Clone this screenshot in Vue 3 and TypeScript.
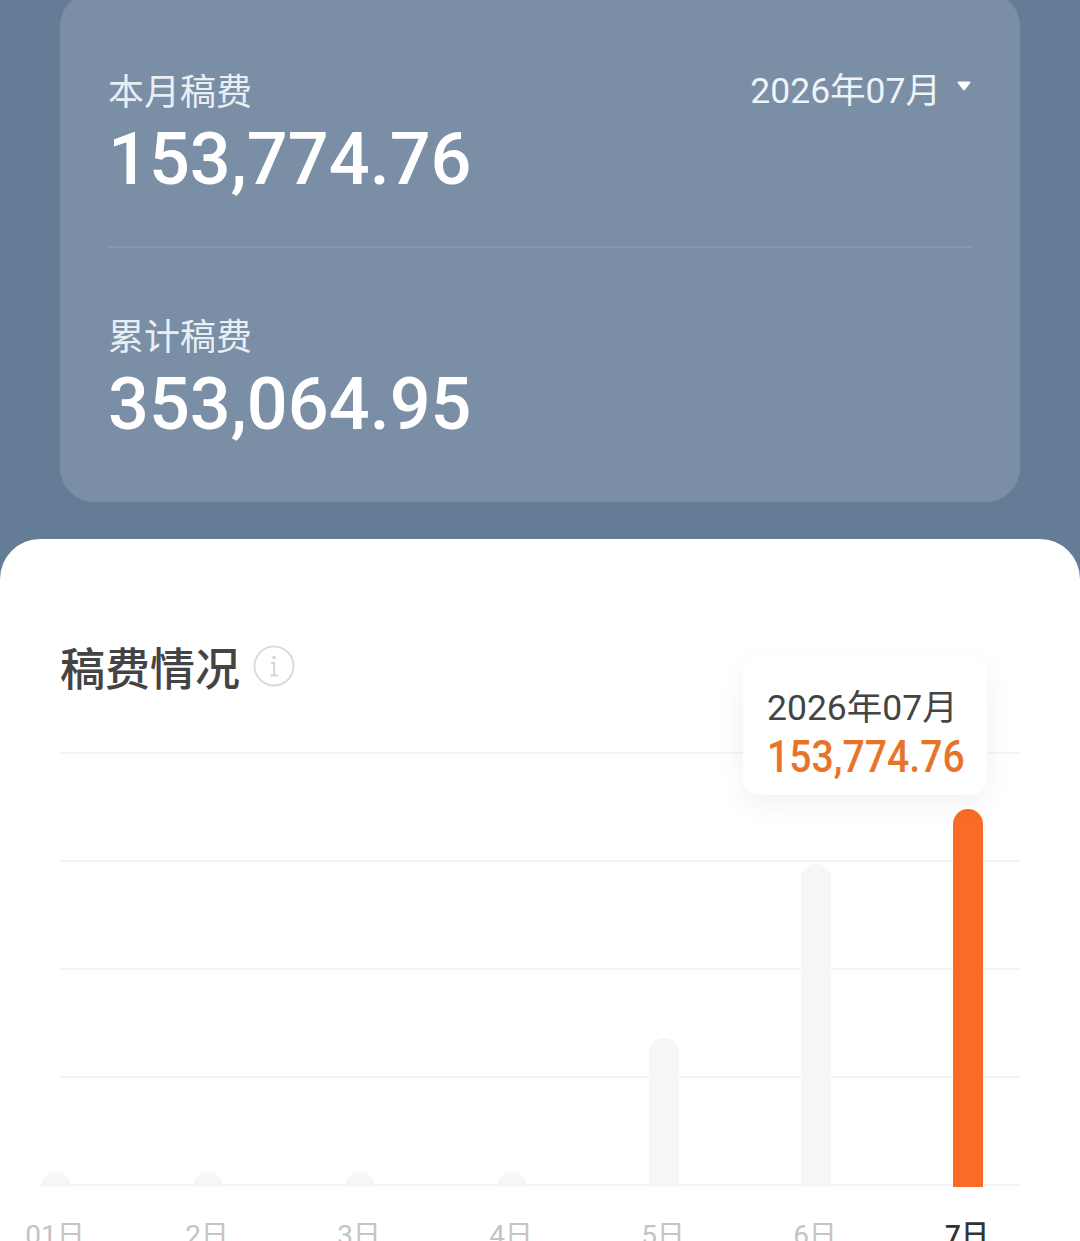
<template>
  <div class="page">
    <section class="summary">
      <div class="block">
        <div class="label">本月稿费</div>
        <div class="amount">153,774.76</div>
        <div class="month-picker">
          <span>2026年07月</span>
          <svg class="caret" width="14" height="10" viewBox="0 0 14 10">
            <path d="M1.5 1.5h11L7 8.5z" fill="#fff" stroke="#fff" stroke-width="2" stroke-linejoin="round" />
          </svg>
        </div>
      </div>
      <div class="divider"></div>
      <div class="block block-total">
        <div class="label">累计稿费</div>
        <div class="amount">353,064.95</div>
      </div>
    </section>

    <section class="sheet">
      <div class="title-row">
        <h2 class="title">稿费情况</h2>
        <svg class="info" width="42" height="42" viewBox="0 0 42 42" fill="none">
          <circle cx="21" cy="21" r="19.5" stroke="#dcdcdc" stroke-width="2" />
          <circle cx="21" cy="12.5" r="1.8" fill="#d4d4d4" />
          <path d="M18 18h3.2v12M17.5 30.5h7.5" stroke="#d4d4d4" stroke-width="1.8" />
        </svg>
      </div>

      <div class="chart">
        <div class="grid">
          <div v-for="n in 5" :key="n" class="grid-line"></div>
        </div>
        <div class="bars">
          <div v-for="d in days" :key="d.label" class="slot">
            <div class="bar" :class="{ active: d.active }" :style="{ height: d.height + 'px' }"></div>
          </div>
        </div>
        <div class="tooltip">
          <div class="tooltip-date">2026年07月</div>
          <div class="tooltip-value">153,774.76</div>
        </div>
      </div>

      <div class="axis">
        <div v-for="d in days" :key="d.label" class="slot tick" :class="{ active: d.active }">{{ d.label }}</div>
      </div>
    </section>
  </div>
</template>

<script setup lang="ts">
interface DayItem {
  label: string
  height: number
  active?: boolean
}

// 柱高按截图量出来的
const days: DayItem[] = [
  { label: '01日', height: 15 },
  { label: '2日', height: 15 },
  { label: '3日', height: 15 },
  { label: '4日', height: 15 },
  { label: '5日', height: 149 },
  { label: '6日', height: 323 },
  { label: '7日', height: 378, active: true }
]
</script>

<style>
html,
body {
  margin: 0;
  overflow: hidden;
}
</style>

<style scoped>
.page {
  width: 1080px;
  height: 1241px;
  overflow: hidden;
  background: #647c96;
  font-family: Roboto, 'Noto Sans CJK SC', sans-serif;
}

/* 顶部汇总卡片 */
.summary {
  margin: -8px 60px 0;
  height: 510px;
  box-sizing: border-box;
  padding: 0 48px;
  background: #7a8ea6;
  border-radius: 34px;
  color: #fff;
}

.block {
  position: relative;
  height: 254px;
  padding-top: 77px;
  box-sizing: border-box;
}

.block-total {
  padding-top: 66px;
}

.label {
  font-size: 36px;
  line-height: 49px;
  color: #e9eef3;
}

.amount {
  font-size: 72px;
  line-height: 84px;
  font-weight: 500;
}

.month-picker {
  position: absolute;
  top: 77px;
  right: 0;
  display: flex;
  align-items: center;
  gap: 16px;
  font-size: 35.5px;
  line-height: 44px;
  color: #eef3f8;
}

.caret {
  margin-top: -10px;
  margin-right: 1px;
}

.divider {
  height: 2px;
  background: #8699ae;
}

/* 白色内容区 */
.sheet {
  margin-top: 37px;
  height: 702px;
  padding: 0 60px;
  background: #fff;
  border-radius: 40px 40px 0 0;
}

.title-row {
  display: flex;
  align-items: center;
  gap: 13px;
  height: 213px;
  padding-top: 42px;
  box-sizing: border-box;
}

.title {
  margin: 0;
  font-size: 45px;
  font-weight: 500;
  color: #444;
}

.info {
  margin-top: -2px;
}

.chart {
  position: relative;
  height: 434px;
}

.grid {
  display: flex;
  flex-direction: column;
  gap: 106px;
}

.grid-line {
  height: 2px;
  background: #f3f3f3;
}

.bars {
  position: absolute;
  left: -80px;
  bottom: -1px;
  display: flex;
  align-items: flex-end;
}

.slot {
  width: 152px;
  flex-shrink: 0;
}

.bar {
  width: 30px;
  margin: 0 auto;
  background: #f6f6f6;
  border-radius: 15px 15px 0 0;
}

.bar.active {
  background: #f96b26;
}

.tooltip {
  position: absolute;
  left: 683px;
  top: -96px;
  width: 244px;
  height: 139px;
  box-sizing: border-box;
  padding: 29px 0 0 24px;
  background: #fff;
  border-radius: 16px;
  box-shadow: 0 8px 28px rgba(0, 0, 0, 0.06);
}

.tooltip-date {
  font-size: 35.5px;
  line-height: 46px;
  color: #444;
}

.tooltip-value {
  font-size: 45px;
  line-height: 52px;
  font-weight: 500;
  color: #e8742a;
  transform: scaleX(0.87);
  transform-origin: left center;
  white-space: nowrap;
}

.axis {
  display: flex;
  margin: 32px 0 0 -81px;
}

.tick {
  text-align: center;
  font-size: 28px;
  line-height: 36px;
  color: #c4c4c4;
}

.tick.active {
  color: #333;
  font-weight: 500;
}
</style>
